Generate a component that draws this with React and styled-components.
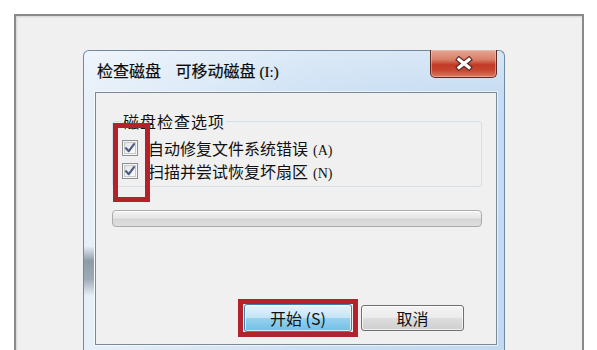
import React from "react";
import styled, { createGlobalStyle } from "styled-components";

const Global = createGlobalStyle`
  html, body { margin: 0; padding: 0; background: #ffffff; overflow: hidden; }
  body { font-family: "Noto Sans CJK SC", "Liberation Sans", sans-serif; color: #111; }
`;

const Page = styled.div`
  width: 597px;
  height: 350px;
  padding: 14px 0 0 14px;
  box-sizing: border-box;
  overflow: hidden;
`;

const Frame = styled.div`
  width: 570px;
  height: 340px;
  box-sizing: border-box;
  border: 2px solid #8a8a8a;
  border-bottom: none;
  background: #f0f0f0;
  padding: 34px 0 0 67px;
  box-shadow: inset 1px 1px 2px rgba(0, 0, 0, 0.12);
`;

const Dialog = styled.div`
  width: 422px;
  height: 303px;
  box-sizing: border-box;
  display: flex;
  flex-direction: column;
  border: 1px solid #7089a3;
  border-bottom: none;
  border-radius: 6px 6px 0 0;
  padding: 0 7px 8px 11px;
  background:
    linear-gradient(to bottom, transparent 195px, rgba(70, 85, 100, 0.55) 210px, rgba(70, 85, 100, 0.45) 228px, transparent 245px) left top / 10px 100% no-repeat,
    linear-gradient(90deg, rgba(255, 255, 255, 0.6) 0%, rgba(255, 255, 255, 0.15) 55%, rgba(255, 255, 255, 0) 100%),
    linear-gradient(to bottom, #d6e6f6 0%, #c6dcf2 45px, #c2d9f0 100%);
`;

const TitleBar = styled.div`
  height: 41px;
  display: flex;
  align-items: flex-start;
`;

const Title = styled.div`
  margin: 9px 0 0 2px;
  font-size: 16px;
  line-height: 20px;
  word-spacing: 11px;
  color: #0a0a0a;
  white-space: nowrap;
  -webkit-text-stroke: 0.2px #0a0a0a;
`;

const Drive = styled.span`
  font-family: "Liberation Serif", serif;
  font-size: 15px;
  margin-left: 4px;
  word-spacing: 0;
`;

const CloseButton = styled.div`
  margin: -1px 0 0 auto;
  width: 67px;
  height: 28px;
  box-sizing: border-box;
  border: 1px solid #5d2a22;
  border-top: none;
  border-radius: 0 0 5px 5px;
  background: linear-gradient(to bottom, #e6a696 0%, #d98068 35%, #c13a25 55%, #c7472f 75%, #d97a60 100%);
  display: flex;
  align-items: center;
  justify-content: center;
  box-shadow: inset 0 0 0 1px rgba(255, 210, 200, 0.45);
`;

const Panel = styled.div`
  flex: 1;
  position: relative;
  display: flex;
  flex-direction: column;
  border: 1px solid #7b8896;
  box-shadow: 0 0 0 1px rgba(255, 255, 255, 0.6);
  background: #f0f0f0;
  padding: 18px 14px 7px 16px;
`;

const Group = styled.fieldset`
  margin: 0;
  padding: 5px 9px 4px 9px;
  border: 1px solid #d5dfe5;
  border-radius: 3px;
  min-width: 0;
`;

const Legend = styled.legend`
  padding: 0 1px;
  font-size: 16px;
  line-height: 20px;
  letter-spacing: 1px;
  color: #111;
`;

const Option = styled.label`
  height: 23px;
  display: flex;
  align-items: center;
  gap: 10px;
  font-size: 16px;
  color: #111;
  white-space: nowrap;
`;

const CheckBox = styled.span`
  width: 16px;
  height: 16px;
  box-sizing: border-box;
  border: 1px solid #8f8f8f;
  background: linear-gradient(135deg, #dedede 0%, #f4f4f4 60%, #ffffff 100%);
  box-shadow: inset 0 0 0 1px #f6f6f6, inset 0 0 0 2px #c9c9c9;
  display: flex;
  align-items: center;
  justify-content: center;
  flex-shrink: 0;
`;

const Shortcut = styled.span`
  font-family: "Liberation Serif", serif;
  font-size: 14px;
  margin-left: 5px;
`;

const Progress = styled.div`
  margin-top: 23px;
  height: 17px;
  box-sizing: border-box;
  border: 1px solid #aaaaaa;
  border-radius: 4px;
  background: linear-gradient(to bottom, #f3f3f3 0%, #e6e6e6 45%, #d6d6d6 55%, #dedede 100%);
  box-shadow: inset 0 1px 0 #ffffff;
`;

const ButtonRow = styled.div`
  margin-top: auto;
  display: flex;
  align-items: center;
  justify-content: flex-end;
  padding-right: 18px;
`;

const Highlight = styled.span`
  display: flex;
  border: 5px solid #b3222b;
  padding: 0 1px;
`;

const Button = styled.button`
  width: ${(p) => (p.$primary ? "108px" : "103px")};
  height: ${(p) => (p.$primary ? "28px" : "26px")};
  margin-left: ${(p) => (p.$primary ? "0" : "3px")};
  box-sizing: border-box;
  border-radius: 3px;
  font-family: "Noto Sans CJK SC", "Liberation Sans", sans-serif;
  font-size: 16px;
  line-height: 1;
  color: #111;
  padding: 0;
  border: 1px solid ${(p) => (p.$primary ? "#3c7fb1" : "#707070")};
  background: ${(p) =>
    p.$primary
      ? "linear-gradient(to bottom, #e5f4fc 0%, #c4e5f6 48%, #98d1ef 52%, #6ec0e8 100%)"
      : "linear-gradient(to bottom, #f4f4f4 0%, #ebebeb 48%, #dddddd 52%, #cfcfcf 100%)"};
  box-shadow: inset 0 0 0 1px rgba(255, 255, 255, 0.7);
`;

const Annotation = styled.div`
  position: absolute;
  left: 17px;
  top: 30px;
  width: 37px;
  height: 79px;
  box-sizing: border-box;
  border: 5px solid #b3222b;
  pointer-events: none;
`;

const Check = () => (
  <svg width="12" height="12" viewBox="0 0 12 12">
    <path d="M2 6.2 L4.8 9.2 L10 2.2" fill="none" stroke="#4a5d84" strokeWidth="2.2" strokeLinecap="round" strokeLinejoin="round" />
  </svg>
);

const CloseX = () => (
  <svg width="20" height="15" viewBox="0 0 20 15">
    <path d="M5 3.5 L15 11.5 M15 3.5 L5 11.5" stroke="#5a2a22" strokeWidth="5.5" strokeLinecap="square" />
    <path d="M5 3.5 L15 11.5 M15 3.5 L5 11.5" stroke="#ffffff" strokeWidth="3.2" strokeLinecap="square" />
  </svg>
);

export default function App() {
  return (
    <>
      <Global />
      <Page>
        <Frame>
          <Dialog>
            <TitleBar>
              <Title>
                检查磁盘 可移动磁盘<Drive>(I:)</Drive>
              </Title>
              <CloseButton>
                <CloseX />
              </CloseButton>
            </TitleBar>
            <Panel>
              <Group>
                <Legend>磁盘检查选项</Legend>
                <Option>
                  <CheckBox>
                    <Check />
                  </CheckBox>
                  <span>
                    自动修复文件系统错误<Shortcut>(A)</Shortcut>
                  </span>
                </Option>
                <Option>
                  <CheckBox>
                    <Check />
                  </CheckBox>
                  <span>
                    扫描并尝试恢复坏扇区<Shortcut>(N)</Shortcut>
                  </span>
                </Option>
              </Group>
              <Progress />
              <ButtonRow>
                <Highlight>
                  <Button $primary>开始 (S)</Button>
                </Highlight>
                <Button>取消</Button>
              </ButtonRow>
              <Annotation />
            </Panel>
          </Dialog>
        </Frame>
      </Page>
    </>
  );
}
